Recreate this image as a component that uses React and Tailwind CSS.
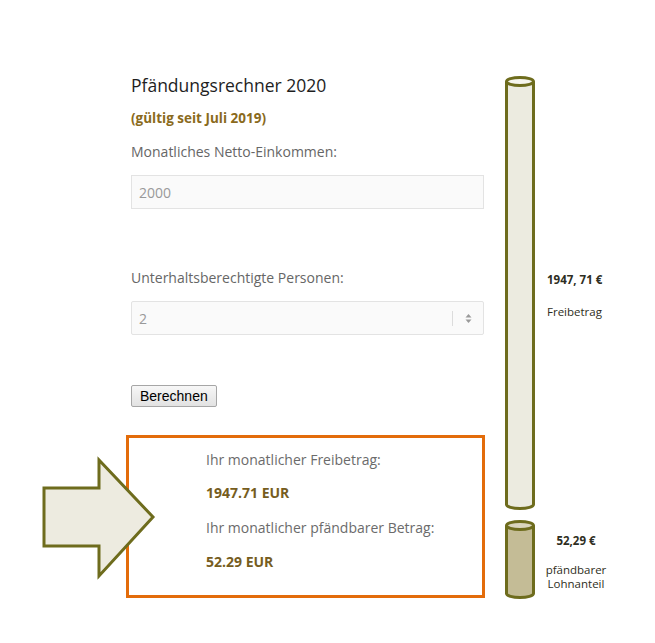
import React from 'react';

const OLIVE = '#6e6c1d';

function Cylinder({ height, fill, topFill }) {
  const w = 30;
  const rx = 13.5;
  const ry = 4;
  const bottom = height - ry - 1.5;
  return (
    <svg width={w} height={height} viewBox={`0 0 ${w} ${height}`} className="block shrink-0">
      <path
        d={`M1.5 ${ry + 1.5} L1.5 ${bottom} A${rx} ${ry} 0 0 0 28.5 ${bottom} L28.5 ${ry + 1.5}`}
        fill={fill}
        stroke={OLIVE}
        strokeWidth="3"
      />
      <ellipse cx="15" cy={ry + 1.5} rx={rx} ry={ry} fill={topFill} stroke={OLIVE} strokeWidth="3" />
    </svg>
  );
}

function Arrow() {
  return (
    <svg width="118" height="125" viewBox="0 0 118 125" className="absolute left-[40px] top-[455px]">
      <polygon
        points="4,33 59,33 59,5 113,62 59,121 59,91 4,91"
        fill="#edebe0"
        stroke={OLIVE}
        strokeWidth="3"
        strokeLinejoin="miter"
      />
    </svg>
  );
}

export default function App() {
  return (
    <div className="relative w-[655px] h-[643px] bg-white overflow-hidden font-['Open_Sans',sans-serif]">
      <div className="flex">
        <div className="ml-[126px] w-[359px] shrink-0">
          <div className="pl-[5px] pr-[1px]">
            <h1 className="mt-[73px] text-[17.5px] leading-[24px] font-normal text-[#1e1e1e]">
              Pfändungsrechner 2020
            </h1>
            <p className="mt-[12px] text-[13.5px] leading-[18px] font-bold text-[#8a6a1c]">
              (gültig seit Juli 2019)
            </p>
            <label className="block mt-[15px] text-[14px] leading-[20px] text-[#666]">
              Monatliches Netto-Einkommen:
            </label>
            <div className="mt-[13px] h-[34px] border border-[#e3e3e3] bg-[#fafafa] flex items-center px-[7px] text-[14px] text-[#999]">
              2000
            </div>
            <label className="block mt-[59px] text-[14px] leading-[20px] text-[#666]">
              Unterhaltsberechtigte Personen:
            </label>
            <div className="mt-[13px] h-[34px] border border-[#e3e3e3] bg-[#fafafa] rounded-[2px] flex items-center pl-[7px] pr-[11px] text-[14px] text-[#999]">
              <span className="flex-1">2</span>
              <span className="w-px h-[15px] bg-[#dcdcdc] mr-[12px]" />
              <svg width="7" height="11" viewBox="0 0 7 11" className="block">
                <path d="M3.5 1 L6.5 4.5 L0.5 4.5 Z" fill="#9a9a9a" />
                <path d="M3.5 10 L6.5 6.5 L0.5 6.5 Z" fill="#9a9a9a" />
              </svg>
            </div>
            <button className="mt-[50px] h-[22px] px-[8px] border border-[#a6a6a6] rounded-[2px] bg-gradient-to-b from-[#f7f7f7] to-[#e2e2e2] text-[14px] leading-[18px] text-black font-['Liberation_Sans',Arial,sans-serif]">
              Berechnen
            </button>
          </div>

          <div className="mt-[28px] h-[163px] border-[3px] border-[#e36c0a] pl-[77px] pt-[12px]">
            <p className="text-[14px] leading-[20px] text-[#6b6b6b]">Ihr monatlicher Freibetrag:</p>
            <p className="mt-[13px] text-[14px] leading-[20px] font-bold text-[#765d1e]">1947.71 EUR</p>
            <p className="mt-[15px] text-[14px] leading-[20px] text-[#6b6b6b]">Ihr monatlicher pfändbarer Betrag:</p>
            <p className="mt-[14px] text-[14px] leading-[20px] font-bold text-[#765d1e]">52.29 EUR</p>
          </div>
        </div>

        <div className="ml-[20px] flex flex-col">
          <div className="mt-[76px] flex items-center gap-[12px]">
            <Cylinder height={434} fill="#ecebe0" topFill="#f6f5ee" />
            <div className="text-[#2e2e22] mt-[6px]">
              <p className="text-[11.5px] leading-[16px] font-bold">1947, 71 €</p>
              <p className="mt-[16px] text-[11.5px] leading-[16px]">Freibetrag</p>
            </div>
          </div>
          <div className="mt-[10px] flex items-center gap-[10px]">
            <Cylinder height={79} fill="#c4bc96" topFill="#dad5bd" />
            <div className="w-[62px] text-center text-[#2e2e22] mt-[4px]">
              <p className="text-[11.5px] leading-[16px] font-bold">52,29 €</p>
              <p className="mt-[14px] text-[11.5px] leading-[14px]">pfändbarer</p>
              <p className="text-[11.5px] leading-[14px]">Lohnanteil</p>
            </div>
          </div>
        </div>
      </div>
      <Arrow />
    </div>
  );
}
